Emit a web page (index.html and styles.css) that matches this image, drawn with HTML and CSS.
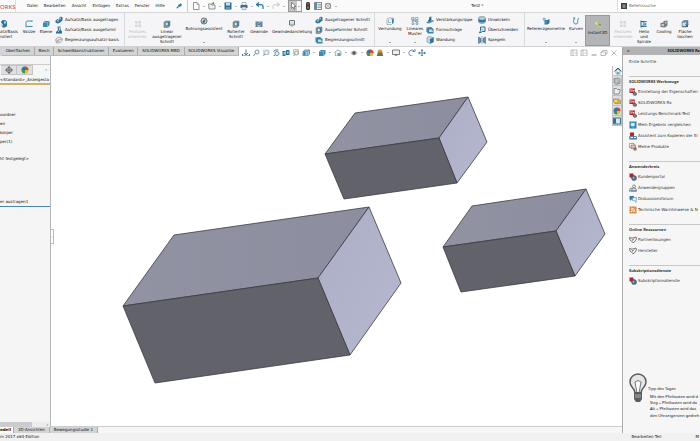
FILE: index.html
```html
<!DOCTYPE html>
<html lang="de">
<head>
    <meta charset="UTF-8">
    <meta name="viewport" content="width=device-width, initial-scale=1.0">
    <title>Teil2 *</title>
    <link rel="stylesheet" href="styles.css">
</head>
<body>
    <!-- shared icons, 16x16 grid -->
    <svg class="sprite" aria-hidden="true">
        <symbol id="i-extrude" viewBox="0 0 16 16"><path d="M1 9l4-3 3 2V4l4-3 3 2v6l-6 5-4 1-4-2z" fill="#2f7396"/><path d="M3 9l3-1 2 2-2 2zM9 4l3-1v3l-3 2z" fill="#9cc6dc"/></symbol>
        <symbol id="i-revolve" viewBox="0 0 16 16"><path d="M2 5a6 5 0 0 1 12 0v6a6 4 0 0 1-10 3l2-5z" fill="#2f7396"/><path d="M8 2v6l5-2a5 4 0 0 0-5-4zM1 9l5-1-3 5z" fill="#a9cee0"/></symbol>
        <symbol id="i-sketch" viewBox="0 0 16 16"><path d="M15 2H6C2 2 2 4 2 7v6h13" fill="none" stroke="#4189ab" stroke-width="2"/><path d="M1 12h3v3H1zM12 1h3v3h-3z" fill="#7fb0c8"/></symbol>
        <symbol id="i-plane" viewBox="0 0 16 16"><path d="M2 5l4-3h9v8l-4 4H2z" fill="#3f89ad"/><path d="M2 5h9v9M11 5l4-3" fill="none" stroke="#a9cee0"/></symbol>
        <symbol id="i-loft" viewBox="0 0 16 16"><path d="M5 1h6v6l3 4v4H2v-3l4-4z" fill="#2c6d91"/><path d="M7 3h2v5l-3 4" fill="none" stroke="#b1d2e1" stroke-width="2"/></symbol>
        <symbol id="i-boundary" viewBox="0 0 16 16"><path d="M1 7q3-5 9-5l5 4q-1 7-7 8H3z" fill="#e3e5e6" stroke="#777b7e"/><path d="M3 13q2-7 12-7M2 7l6 5" fill="none" stroke="#777b7e"/></symbol>
        <symbol id="i-muted" viewBox="0 0 16 16"><path d="M2 2h5v5H2zM9 2h5v5H9zM2 9h5v5H2zM9 9h5v5H9z" fill="#d4d5d7"/></symbol>
        <symbol id="i-cut" viewBox="0 0 16 16"><path d="M2 4l4-2h8v10l-4 3H2z" fill="#87959d" stroke="#66757d"/><path d="M5 5h5v6H5z" fill="#e7f1f5" stroke="#2c6d91"/><path d="M10 5l3-2v7l-3 2z" fill="#397ea1"/></symbol>
        <symbol id="i-hole" viewBox="0 0 16 16"><circle cx="8" cy="8" r="6" fill="#d9dddb" stroke="#667075" stroke-width="2"/><path d="M4 10l5-6 2 4-3 5z" fill="#3e7692"/><path d="M11 1l3 3-4 3z" fill="#bda34a"/></symbol>
        <symbol id="i-thread" viewBox="0 0 16 16"><path d="M1 3h14v11H1z" fill="#6b818d"/><path d="M5 3h6v9l-3 2-3-2z" fill="#b6dae9"/><path d="M5 5l6 2M5 8l6 2" stroke="#28688b" stroke-width="2"/></symbol>
        <symbol id="i-cosmetic" viewBox="0 0 16 16"><path d="M3 1h10v9H3z" fill="#f5f5f5" stroke="#74797c" stroke-width="2"/><path d="M6 3v6M10 3v6M6 11l2 3 2-3" fill="none" stroke="#8f9497"/></symbol>
        <symbol id="i-fillet" viewBox="0 0 16 16"><path d="M2 5q0-3 5-3h8v9l-4 4H2z" fill="#f0f5f7" stroke="#567c90"/><path d="M7 2q5 0 5 6v6l3-3V4z" fill="#3284aa"/><path d="M5 5v6h5" fill="none" stroke="#567c90"/></symbol>
        <symbol id="i-pattern" viewBox="0 0 16 16"><g fill="#e5f0f5" stroke="#49778e"><path d="M1 1h5v4H1zM9 1h5v4H9zM2 7h4v3H2zM9 7h5v3H9zM2 12h4v3H2zM10 12h4v3h-4z"/></g><path d="M4 3l8 8" stroke="#2b7297"/></symbol>
        <symbol id="i-rib" viewBox="0 0 16 16"><path d="M1 12l5-2V2l5-1v8l4-1v3l-9 4-5-1z" fill="#538eaa"/><path d="M3 11l7-9v7z" fill="#275f7d"/></symbol>
        <symbol id="i-draft" viewBox="0 0 16 16"><path d="M1 3l9-1 5 4v9H4L1 11z" fill="#3c83a5"/><path d="M6 7h6l2 5H6z" fill="#c2dce7"/></symbol>
        <symbol id="i-shell" viewBox="0 0 16 16"><path d="M2 3l5-2 8 2v9l-7 3-6-3z" fill="#c7d7df" stroke="#4c7990"/><path d="M8 6l7-3v9l-7 3z" fill="#2879a1"/></symbol>
        <symbol id="i-wrap" viewBox="0 0 16 16"><path d="M1 4q0-3 7-3t7 3v7q0 4-7 4t-7-4z" fill="#b7c9d2" stroke="#547486"/><path d="M1 6q7 4 14 0v5q-7 4-14 0z" fill="#2879a1"/></symbol>
        <symbol id="i-intersect" viewBox="0 0 16 16"><path d="M5 2h9v9H9l-6 3 2-5z" fill="#eef4f7" stroke="#296d91" stroke-width="2"/><circle cx="9" cy="7" r="2" fill="#8ab3c6"/></symbol>
        <symbol id="i-mirror" viewBox="0 0 16 16"><path d="M1 2l5 3v7l-5 3zM15 2l-5 3v7l5 3z" fill="#5d98b4" stroke="#285f7e"/><path d="M8 0v16" stroke="#444" stroke-dasharray="3 1"/></symbol>
        <symbol id="i-refgeo" viewBox="0 0 16 16"><path d="M5 6h6l4-2v8l-4 3H5z" fill="#2d769b"/><path d="M4 1v7M1 4h7" stroke="#74a5bd" stroke-width="2"/><path d="M8 7v6" stroke="#aed0df"/></symbol>
        <symbol id="i-curve" viewBox="0 0 16 16"><path d="M2 2h4c-5 6-3 12 2 12 6 0 1-9 6-12" fill="none" stroke="#3986aa" stroke-width="2"/></symbol>
        <symbol id="i-instant" viewBox="0 0 16 16"><path d="M1 3l5-2 4 5 5 8-7-4z" fill="#dfd44d"/><path d="M7 5l7 1v4l-7-1z" fill="#7da17b"/><path d="M2 4l7 5" stroke="#fff"/></symbol>
        <symbol id="i-helix" viewBox="0 0 16 16"><path d="M2 1v14M2 3h11M2 13h11" stroke="#27698b" stroke-width="2"/><path d="M13 3q-9 0-7 3 8 0 6 3-8-1-6 3h7" fill="none" stroke="#3a8fb7" stroke-width="2"/></symbol>
        <symbol id="i-cooling" viewBox="0 0 16 16"><path d="M1 6l6-1V2l8-1v10l-5 4-9-1z" fill="#777f84"/><path d="M3 8h5v4H3zM10 4h3v3h-3z" fill="#c4c9cb"/></symbol>
        <symbol id="i-delface" viewBox="0 0 16 16"><path d="M2 4l4-3h8v9l-3 4H2z" fill="#6690a5" stroke="#40697e"/><path d="M3 5h7v7H3z" fill="#c9dae2"/><path d="M9 9l5 5m0-5l-5 5" stroke="#454c51" stroke-width="2"/></symbol>

        <symbol id="i-pin" viewBox="0 0 16 16"><path d="M2 14l5-5M6 5l5 5M8 7l4-4 2 2-4 4" fill="none" stroke="#2c7ba4" stroke-width="3"/></symbol>
        <symbol id="i-new" viewBox="0 0 16 16"><path d="M3 1h7l4 4v10H3z" fill="#fff" stroke="#6f7376" stroke-width="1.5"/><path d="M10 1v4h4" fill="none" stroke="#6f7376"/></symbol>
        <symbol id="i-open" viewBox="0 0 16 16"><path d="M1 4h5l2 2h6v8H2z" fill="#eef1ed" stroke="#717b70" stroke-width="1.5"/><path d="M7 5q1-4 5-3l-1-1m1 1l-2 3" fill="none" stroke="#488c42" stroke-width="2"/></symbol>
        <symbol id="i-save" viewBox="0 0 16 16"><path d="M1 1h14v14H1z" fill="#2f7396"/><path d="M4 2h8v5H4z" fill="#cfe0e8"/><path d="M4 10h8v5H4z" fill="#7d8f98"/></symbol>
        <symbol id="i-print" viewBox="0 0 16 16"><path d="M4 1h8v5H4z" fill="#fff" stroke="#62757f"/><path d="M1 6h14v6H1z" fill="#35718f"/><path d="M4 10h8v5H4z" fill="#e8edf0" stroke="#62757f"/></symbol>
        <symbol id="i-undo" viewBox="0 0 16 16"><path d="M6 1L1 5l5 4M2 5h8q4 0 4 4v5" fill="none" stroke="#2f79a0" stroke-width="2.5"/></symbol>
        <symbol id="i-redo" viewBox="0 0 16 16"><path d="M10 1l5 4-5 4M14 5H6q-4 0-4 4v5" fill="none" stroke="#d3d4d6" stroke-width="2.5"/></symbol>
        <symbol id="i-cursor" viewBox="0 0 16 16"><path d="M5 1v12l3-3 2 5 2-1-2-5h4z" fill="#fff" stroke="#333"/></symbol>
        <symbol id="i-traffic" viewBox="0 0 16 16"><rect x="4" y="0" width="8" height="16" rx="3" fill="#34373a"/><circle cx="8" cy="4" r="2.5" fill="#c13a30"/><circle cx="8" cy="11" r="2.5" fill="#4e8b4a"/></symbol>
        <symbol id="i-props" viewBox="0 0 16 16"><path d="M1 1h14v14H1z" fill="#eef2f4" stroke="#526872" stroke-width="1.5"/><path d="M2 2h4v12H2z" fill="#688b9b"/><path d="M7 5h7M7 8h7M7 11h7" stroke="#526872"/></symbol>
        <symbol id="i-gear" viewBox="0 0 16 16"><circle cx="8" cy="8" r="5.5" fill="#ececec" stroke="#888" stroke-width="2"/><circle cx="8" cy="8" r="2" fill="none" stroke="#888"/><path d="M3 3l2 2M11 11l2 2M3 13l2-2M11 5l2-2" stroke="#888" stroke-width="2"/></symbol>
        <symbol id="i-cmd" viewBox="0 0 16 16"><path d="M0 0h16v16H0z" fill="#3b3f43"/><path d="M4 3h8v10H4z" fill="#8d9195"/><path d="M6 5h4M6 8h4" stroke="#3b3f43"/></symbol>

        <symbol id="i-normal" viewBox="0 0 16 16"><path d="M8 1v10M4 8l4 4 4-4M1 10v4h14v-4" fill="none" stroke="#467d98" stroke-width="2"/></symbol>
        <symbol id="i-zoomfit" viewBox="0 0 16 16"><circle cx="10" cy="6" r="4" fill="#f2f8fb" stroke="#6f97ab" stroke-width="2"/><path d="M7 9l-5 6" stroke="#6f7f87" stroke-width="2"/></symbol>
        <symbol id="i-zoomarea" viewBox="0 0 16 16"><path d="M3 2h11v9H3z" fill="none" stroke="#a7b1b7"/><circle cx="9" cy="7" r="4" fill="#f5f9fb" stroke="#8aa5b3" stroke-width="1.5"/><path d="M6 10l-4 5" stroke="#88959c" stroke-width="2"/></symbol>
        <symbol id="i-prev" viewBox="0 0 16 16"><circle cx="10" cy="9" r="4" fill="#f0f6f9" stroke="#688d9f" stroke-width="2"/><path d="M13 2H6L3 6M6 12l-4 3" fill="none" stroke="#4b8099" stroke-width="2"/></symbol>
        <symbol id="i-section" viewBox="0 0 16 16"><path d="M1 4h6v10H1zM8 2h7v10H8z" fill="#317495"/><path d="M3 6h3v5H3zM10 5h3v4h-3z" fill="#a7c8d7"/></symbol>
        <symbol id="i-annot" viewBox="0 0 16 16"><path d="M3 1h10v9H3z" fill="#f7efda" stroke="#a98d53"/><circle cx="9" cy="8" r="4" fill="#e8eef0" stroke="#7e8e96" stroke-width="1.5"/><path d="M6 11l-4 4" stroke="#7e8e96" stroke-width="2"/></symbol>
        <symbol id="i-cube" viewBox="0 0 16 16"><path d="M2 5l4-3h9v8l-4 4H2z" fill="#a9cddd" stroke="#487e98" stroke-width="1.5"/><path d="M2 5h9v9M11 5l4-3" fill="none" stroke="#487e98"/><path d="M3 6h4v7H3z" fill="#3e84a6"/></symbol>
        <symbol id="i-hide" viewBox="0 0 16 16"><path d="M2 6l5-4 7 3v7l-4 2H3z" fill="#eef3f5" stroke="#7d98a5" stroke-width="1.5"/><path d="M7 8h6v6H7z" fill="#6ba0b9"/></symbol>
        <symbol id="i-eye" viewBox="0 0 16 16"><path d="M1 8q7-8 14 0-7 8-14 0z" fill="#e0e0e0" stroke="#8e9194"/><circle cx="8" cy="8" r="3.5" fill="#4f5458"/></symbol>
        <symbol id="i-ball" viewBox="0 0 16 16"><circle cx="8" cy="8" r="7" fill="#ddbe49"/><path d="M8 8V1a7 7 0 0 0-7 7z" fill="#3a73a9"/><path d="M8 8V1a7 7 0 0 1 7 7z" fill="#c74a37"/><path d="M8 8H1a7 7 0 0 0 7 7z" fill="#4a9055"/></symbol>
        <symbol id="i-scene" viewBox="0 0 16 16"><circle cx="8" cy="6" r="5" fill="#c99b48"/><path d="M1 15l3-8h8l3 8z" fill="#4e8155"/><path d="M8 7l5 1-1 4-4-1z" fill="#b45440"/></symbol>
        <symbol id="i-monitor" viewBox="0 0 16 16"><path d="M1 2h14v9H1zM5 14h6M8 11v3" fill="#f0f1f2" stroke="#777d82" stroke-width="2"/></symbol>
        <symbol id="i-rotate" viewBox="0 0 16 16"><path d="M9 14A6 6 0 1 1 12 4M14 0v5H9" fill="none" stroke="#4b91b1" stroke-width="2"/></symbol>
        <symbol id="i-pan" viewBox="0 0 16 16"><path d="M8 1v14M1 8h14" stroke="#5689a3" stroke-width="2"/><path d="M8 0l3 4H5zM8 16l3-4H5zM0 8l4-3v6zM16 8l-4-3v6z" fill="#5689a3"/></symbol>

        <symbol id="i-wpane" viewBox="0 0 16 16"><path d="M2 2h12v12H2zM6 2v12M9 8h4" fill="none" stroke="#a4a6a8" stroke-width="1.5"/></symbol>
        <symbol id="i-wmin" viewBox="0 0 16 16"><path d="M3 12h10" stroke="#8b8d8f" stroke-width="2"/></symbol>
        <symbol id="i-wrestore" viewBox="0 0 16 16"><path d="M2 6h9v7H2zM5 6V3h9v7h-3" fill="none" stroke="#a4a6a8" stroke-width="1.5"/></symbol>
        <symbol id="i-wclose" viewBox="0 0 16 16"><path d="M3 3l10 10M13 3L3 13" stroke="#a4a6a8" stroke-width="1.5"/></symbol>

        <symbol id="i-target" viewBox="0 0 16 16"><circle cx="8" cy="8" r="5" fill="none" stroke="#454749" stroke-width="1.5"/><path d="M8 0v16M0 8h16" stroke="#454749" stroke-width="1.5"/></symbol>
        <symbol id="i-home" viewBox="0 0 16 16"><path d="M1 9l7-7 7 7" fill="none" stroke="#265b7a" stroke-width="2"/><path d="M4 8v6h8V8L8 4z" fill="#e9f2f7" stroke="#397593"/><path d="M7 10h2v4H7z" fill="#265b7a"/></symbol>
        <symbol id="i-library" viewBox="0 0 16 16"><path d="M2 3l8-1 4 2v9l-8 2-4-3z" fill="#a9aaaa" stroke="#6f7172"/><path d="M6 6l7-1M6 9l7-1M6 5v9" stroke="#e3e3e3"/></symbol>
        <symbol id="i-folder" viewBox="0 0 16 16"><path d="M2 14V3h5l2 2h5v3L12 14z" fill="#eee" stroke="#6c6e70" stroke-width="1.5"/></symbol>
        <symbol id="i-palette" viewBox="0 0 16 16"><path d="M1 4h10l4 3v6H4l-3-3z" fill="#d6af46" stroke="#90752f"/><path d="M3 6h5v4H3z" fill="#f4dc92"/></symbol>
        <symbol id="i-list" viewBox="0 0 16 16"><path d="M1 2h14v12H1z" fill="#d8e5eb" stroke="#3f7591" stroke-width="2"/><path d="M2 3h4v10H2z" fill="#33708e"/></symbol>

        <symbol id="i-sw" viewBox="0 0 16 16"><path d="M1 1h11v9H1z" fill="#b0222c"/><path d="M5 3H3v2h2v2H3M7 3l1 4 1-3 1 3 1-4" fill="none" stroke="#fff"/><path d="M8 9l4-1 3 2v4l-4 1-3-2z" fill="#7b7d82" stroke="#46484c"/></symbol>
        <symbol id="i-compare" viewBox="0 0 16 16"><path d="M1 1h14v14H1z" fill="#2f86b3"/><path d="M4 4h7v6H4zM6 12h5" fill="#e7f4fa" stroke="#9cc9df"/></symbol>
        <symbol id="i-assist" viewBox="0 0 16 16"><path d="M2 1h8v7H2z" fill="#b0222c"/><path d="M0 9l7-2 9 2v6H1z" fill="#54799a"/><path d="M3 11h5M10 11h4" stroke="#fff" stroke-width="2"/></symbol>
        <symbol id="i-products" viewBox="0 0 16 16"><path d="M1 1h9v8H1z" fill="#fff" stroke="#a83038"/><path d="M4 4h9v7H4z" fill="#d7c3bf" stroke="#a83038"/><path d="M9 9h6v6H9z" fill="#777"/></symbol>
        <symbol id="i-globe" viewBox="0 0 16 16"><path d="M1 1h8v8H1z" fill="#b0222c"/><circle cx="10" cy="10" r="5" fill="#516b86" stroke="#3b4754"/><path d="M7 9l3-2 1 3-2 3z" fill="#a5b5b1"/></symbol>
        <symbol id="i-group" viewBox="0 0 16 16"><circle cx="10" cy="5" r="3" fill="#f3f3f3" stroke="#66696c" stroke-width="1.5"/><path d="M5 14q0-6 5-6t5 6zM1 13q0-5 5-5" fill="#e4e5e6" stroke="#66696c" stroke-width="1.5"/><path d="M0 14h15" stroke="#4d7da0" stroke-width="2"/></symbol>
        <symbol id="i-forum" viewBox="0 0 16 16"><path d="M1 2h9v7H5l-3 3V9H1z" fill="#3c7ca3"/><path d="M7 5h8v6h-1v4l-3-4H7z" fill="#dcebf3" stroke="#3c7ca3"/></symbol>
        <symbol id="i-rss" viewBox="0 0 16 16"><rect x="1" y="1" width="14" height="14" fill="#e1893f"/><circle cx="5" cy="11" r="1.5" fill="#fff"/><path d="M4 7q5 0 5 5M4 4q8 0 8 8" fill="none" stroke="#fff" stroke-width="1.5"/></symbol>
        <symbol id="i-hands" viewBox="0 0 16 16"><path d="M1 3l4 1h3l6-2 1 4-5 7H8L2 8z" fill="#f5f5f5" stroke="#4c4f52" stroke-width="1.5"/><path d="M5 5l3 3 3-3M6 10l3-3" fill="none" stroke="#4c4f52"/></symbol>
    </svg>

    <header class="topbar">
        <span class="logo">ORKS</span>
        <nav class="menu">
            <a href="#">Datei</a>
            <a href="#">Bearbeiten</a>
            <a href="#">Ansicht</a>
            <a href="#">Einfügen</a>
            <a href="#">Extras</a>
            <a href="#">Fenster</a>
            <a href="#">Hilfe</a>
        </nav>
        <button class="pin" aria-label="Anheften"><svg class="icon"><use href="#i-pin"/></svg></button>
        <div class="quick">
            <button class="drop" aria-label="Neu"><svg class="icon"><use href="#i-new"/></svg></button>
            <button class="drop" aria-label="Öffnen"><svg class="icon"><use href="#i-open"/></svg></button>
            <button class="drop" aria-label="Speichern"><svg class="icon"><use href="#i-save"/></svg></button>
            <button class="drop" aria-label="Drucken"><svg class="icon"><use href="#i-print"/></svg></button>
            <button class="drop" aria-label="Rückgängig"><svg class="icon"><use href="#i-undo"/></svg></button>
            <button class="drop" aria-label="Wiederherstellen"><svg class="icon"><use href="#i-redo"/></svg></button>
            <button class="drop picked" aria-label="Auswählen"><svg class="icon"><use href="#i-cursor"/></svg></button>
            <button aria-label="Modellneuaufbau"><svg class="icon"><use href="#i-traffic"/></svg></button>
            <button aria-label="Dateieigenschaften"><svg class="icon"><use href="#i-props"/></svg></button>
            <button class="drop" aria-label="Optionen"><svg class="icon"><use href="#i-gear"/></svg></button>
        </div>
        <h1 class="doc-title">Teil2 *</h1>
        <div class="search">
            <svg class="icon"><use href="#i-cmd"/></svg>
            <input type="text" placeholder="Befehlssuche" aria-label="Befehlssuche">
        </div>
    </header>

    <div class="ribbon">
        <div class="tools boss">
            <button class="tool cropped"><svg class="icon"><use href="#i-revolve"/></svg>atz/Basis<br>rotiert</button>
            <button class="tool"><svg class="icon"><use href="#i-sketch"/></svg>Skizze</button>
            <button class="tool"><svg class="icon"><use href="#i-plane"/></svg>Ebene</button>
            <div class="stack">
                <button><svg class="icon"><use href="#i-extrude"/></svg>Aufsatz/Basis ausgetragen</button>
                <button><svg class="icon"><use href="#i-loft"/></svg>Aufsatz/Basis ausgeformt</button>
                <button><svg class="icon"><use href="#i-boundary"/></svg>Begrenzungsaufsatz/-basis</button>
            </div>
        </div>
        <div class="tools cuts">
            <button class="tool" disabled><svg class="icon"><use href="#i-muted"/></svg>Features<br>erkennen</button>
            <button class="tool"><svg class="icon"><use href="#i-cut"/></svg>Linear<br>ausgetragener<br>Schnitt</button>
            <button class="tool more high"><svg class="icon"><use href="#i-hole"/></svg>Bohrungsassistent</button>
            <button class="tool"><svg class="icon"><use href="#i-cut"/></svg>Rotierter<br>Schnitt</button>
            <button class="tool"><svg class="icon"><use href="#i-thread"/></svg>Gewinde</button>
            <button class="tool"><svg class="icon"><use href="#i-cosmetic"/></svg>Gewindedarstellung</button>
            <div class="stack">
                <button><svg class="icon"><use href="#i-extrude"/></svg>Ausgetragener Schnitt</button>
                <button><svg class="icon"><use href="#i-cut"/></svg>Ausgeformter Schnitt</button>
                <button><svg class="icon"><use href="#i-draft"/></svg>Begrenzungsschnitt</button>
            </div>
        </div>
        <div class="tools shapes">
            <button class="tool more high"><svg class="icon"><use href="#i-fillet"/></svg>Verrundung</button>
            <button class="tool more high"><svg class="icon"><use href="#i-pattern"/></svg>Lineares<br>Muster</button>
            <div class="stack">
                <button><svg class="icon"><use href="#i-rib"/></svg>Verstärkungsrippe</button>
                <button><svg class="icon"><use href="#i-draft"/></svg>Formschräge</button>
                <button><svg class="icon"><use href="#i-shell"/></svg>Wandung</button>
            </div>
            <div class="stack">
                <button><svg class="icon"><use href="#i-wrap"/></svg>Umwickeln</button>
                <button><svg class="icon"><use href="#i-intersect"/></svg>Überschneiden</button>
                <button><svg class="icon"><use href="#i-mirror"/></svg>Spiegeln</button>
            </div>
        </div>
        <div class="tools extras">
            <button class="tool more high"><svg class="icon"><use href="#i-refgeo"/></svg>Referenzgeometrie</button>
            <button class="tool more high"><svg class="icon"><use href="#i-curve"/></svg>Kurven</button>
            <button class="tool active"><svg class="icon"><use href="#i-instant"/></svg>Instant3D</button>
            <button class="tool" disabled><svg class="icon"><use href="#i-muted"/></svg>Features<br>erkennen</button>
            <button class="tool"><svg class="icon"><use href="#i-helix"/></svg>Helix<br>und<br>Spirale</button>
            <button class="tool"><svg class="icon"><use href="#i-cooling"/></svg>Cooling</button>
            <button class="tool"><svg class="icon"><use href="#i-delface"/></svg>Fläche<br>löschen</button>
        </div>
    </div>

    <div class="main">
        <div class="work">
            <div class="tabline">
                <div class="ribbon-tabs">
                    <button>Oberflächen</button>
                    <button>Blech</button>
                    <button>Schweißkonstruktionen</button>
                    <button>Evaluieren</button>
                    <button>SOLIDWORKS MBD</button>
                    <button>SOLIDWORKS Visualize</button>
                </div>
                <div class="view-tools">
                    <button aria-label="Normal auf"><svg class="icon"><use href="#i-normal"/></svg></button>
                    <button aria-label="In Fenster zoomen"><svg class="icon"><use href="#i-zoomfit"/></svg></button>
                    <button aria-label="Ausschnitt vergrößern"><svg class="icon"><use href="#i-zoomarea"/></svg></button>
                    <button aria-label="Vorherige Ansicht"><svg class="icon"><use href="#i-prev"/></svg></button>
                    <button aria-label="Schnittansicht"><svg class="icon"><use href="#i-section"/></svg></button>
                    <button aria-label="Beschriftungen"><svg class="icon"><use href="#i-annot"/></svg></button>
                    <button class="drop" aria-label="Ausrichtung"><svg class="icon"><use href="#i-cube"/></svg></button>
                    <button class="drop" aria-label="Anzeigeart"><svg class="icon"><use href="#i-plane"/></svg></button>
                    <button class="drop" aria-label="Kanten"><svg class="icon"><use href="#i-hide"/></svg></button>
                    <button class="drop" aria-label="Ausblenden"><svg class="icon"><use href="#i-eye"/></svg></button>
                    <button aria-label="Erscheinungsbild"><svg class="icon"><use href="#i-ball"/></svg></button>
                    <button class="drop" aria-label="Bühne"><svg class="icon"><use href="#i-scene"/></svg></button>
                    <button class="drop" aria-label="Ansichtseinstellungen"><svg class="icon"><use href="#i-monitor"/></svg></button>
                    <button aria-label="Drehen"><svg class="icon"><use href="#i-rotate"/></svg></button>
                    <button aria-label="Verschieben"><svg class="icon"><use href="#i-pan"/></svg></button>
                </div>
                <div class="window-tools">
                    <button aria-label="Links anordnen"><svg class="icon"><use href="#i-wpane"/></svg></button>
                    <button aria-label="Rechts anordnen"><svg class="icon"><use href="#i-wpane"/></svg></button>
                    <button aria-label="Minimieren"><svg class="icon"><use href="#i-wmin"/></svg></button>
                    <button aria-label="Verkleinern"><svg class="icon"><use href="#i-wrestore"/></svg></button>
                    <button aria-label="Schließen"><svg class="icon"><use href="#i-wclose"/></svg></button>
                </div>
            </div>

            <div class="stage">
                <aside class="tree">
                    <div class="tree-tabs">
                        <button aria-label="Abmessungen"><svg class="icon"><use href="#i-target"/></svg></button>
                        <button aria-label="Darstellung"><svg class="icon"><use href="#i-ball"/></svg></button>
                        <button class="next" aria-label="Weitere">›</button>
                    </div>
                    <p class="config">&lt;Standard&gt;_Anzeigesta</p>
                    <ul class="features">
                        <li>oordner</li>
                        <li>en</li>
                        <li>körper</li>
                        <li>per(1)</li>
                        <li class="material">ht festgelegt&gt;</li>
                        <li class="last">er austragen1</li>
                    </ul>
                    <div class="hscroll"><span class="thumb"></span>›</div>
                </aside>
                <div class="viewport">
                    <button class="handle" aria-label="Baum einklappen">‹</button>
                    <svg class="model" viewBox="51 56 571 370" preserveAspectRatio="xMinYMin meet" role="img" aria-label="Drei Quader">
                        <defs>
                            <linearGradient id="side" x1="0" y1="0" x2="1" y2="1">
                                <stop offset="0" stop-color="#abaec4"/>
                                <stop offset="1" stop-color="#b5b8ce"/>
                            </linearGradient>
                            <linearGradient id="lid" x1="0" y1="0" x2="1" y2="0">
                                <stop offset="0" stop-color="#9193a3"/>
                                <stop offset="1" stop-color="#8c8e9f"/>
                            </linearGradient>
                        </defs>
                        <g class="box">
                            <path class="lid" d="M123 306L174 235L369 207L318 278Z"/>
                            <path class="side" d="M369 207L401 283L350 355L318 278Z"/>
                            <path class="front" d="M123 306L318 278L350 355L155 383Z"/>
                        </g>
                        <g class="box">
                            <path class="lid" d="M325 154L355 113L468 97L439 138Z"/>
                            <path class="side" d="M468 97L487 142L457 183L439 138Z"/>
                            <path class="front" d="M325 154L439 138L457 183L344 199Z"/>
                        </g>
                        <g class="box">
                            <path class="lid" d="M443 247L472 206L586 189L556 231Z"/>
                            <path class="side" d="M586 189L605 234L575 276L556 231Z"/>
                            <path class="front" d="M443 247L556 231L575 276L461 292Z"/>
                        </g>
                    </svg>
                    <div class="pane-tabs">
                        <button class="on" aria-label="Ressourcen"><svg class="icon"><use href="#i-home"/></svg></button>
                        <button aria-label="Konstruktionsbibliothek"><svg class="icon"><use href="#i-library"/></svg></button>
                        <button aria-label="Datei-Explorer"><svg class="icon"><use href="#i-folder"/></svg></button>
                        <button aria-label="Ansichtspalette"><svg class="icon"><use href="#i-palette"/></svg></button>
                        <button aria-label="Erscheinungsbilder"><svg class="icon"><use href="#i-ball"/></svg></button>
                        <button aria-label="Eigenschaften"><svg class="icon"><use href="#i-list"/></svg></button>
                    </div>
                </div>
            </div>

            <div class="doc-tabs">
                <button class="on">odell</button>
                <button>3D-Ansichten</button>
                <button>Bewegungsstudie 1</button>
            </div>
        </div>

        <aside class="pane">
            <h2 class="pane-head"><span>«</span>SOLIDWORKS Re</h2>
            <p class="first-steps">Erste Schritte</p>
            <section>
                <h3>SOLIDWORKS Werkzeuge</h3>
                <a href="#"><svg class="icon"><use href="#i-sw"/></svg>Einstellung der Eigenschaften-</a>
                <a href="#"><svg class="icon"><use href="#i-sw"/></svg>SOLIDWORKS Rx</a>
                <a href="#"><svg class="icon"><use href="#i-sw"/></svg>Leistungs-Benchmark-Test</a>
                <a href="#"><svg class="icon"><use href="#i-compare"/></svg>Mein Ergebnis vergleichen</a>
                <a href="#"><svg class="icon"><use href="#i-assist"/></svg>Assistent zum Kopieren der Ei</a>
                <a href="#"><svg class="icon"><use href="#i-products"/></svg>Meine Produkte</a>
            </section>
            <section>
                <h3>Anwenderkreis</h3>
                <a href="#"><svg class="icon"><use href="#i-globe"/></svg>Kundenportal</a>
                <a href="#"><svg class="icon"><use href="#i-group"/></svg>Anwendergruppen</a>
                <a href="#"><svg class="icon"><use href="#i-forum"/></svg>Diskussionsforum</a>
                <a href="#"><svg class="icon"><use href="#i-rss"/></svg>Technische Warnhinweise &amp; N</a>
            </section>
            <section>
                <h3>Online Ressourcen</h3>
                <a href="#"><svg class="icon"><use href="#i-hands"/></svg>Partnerlösungen</a>
                <a href="#"><svg class="icon"><use href="#i-hands"/></svg>Hersteller</a>
            </section>
            <section>
                <h3>Subskriptionsdienste</h3>
                <a href="#"><svg class="icon"><use href="#i-globe"/></svg>Subskriptionsdienste</a>
            </section>
            <div class="tip">
                <svg class="bulb" viewBox="0 0 18 30" aria-hidden="true">
                    <path d="M6 20Q6 17 3 14Q1 12 1 9A8 8 0 0 1 17 9Q17 12 15 14Q12 17 12 20Z" fill="#e4e5e5" stroke="#55585b" stroke-width="1.4"/>
                    <path d="M8 20L6 9Q9 6 12 9L10 20" fill="#fafafa" stroke="#77797b"/>
                    <path d="M5 19h8v7l-2 3H7l-2-3z" fill="#5a5d60"/>
                    <path d="M6 22h6M6 24h6" stroke="#b0b2b3"/>
                </svg>
                <div class="tip-text">
                    <h3>Tipp des Tages</h3>
                    <p>Mit den Pfeiltasten wird d<br>Strg + Pfeiltasten wird da<br>Alt + Pfeiltasten wird das</p>
                    <p class="end">den Uhrzeigersinn gedreh</p>
                </div>
            </div>
        </aside>
    </div>

    <footer class="status">
        <span class="edition">m 2017 x64-Edition</span>
        <span class="mode">Bearbeiten Teil</span>
        <span>M</span>
    </footer>
</body>
</html>
```
FILE: styles.css
```css
* {
    box-sizing: border-box;
}
body {
    display: flex;
    flex-direction: column;
    height: 100vh;
    margin: 0;
    overflow: hidden;
    font-family: "DejaVu Sans", Verdana, sans-serif;
    font-size: 4px;
    line-height: 6px;
    color: #111;
    background: #f6f6f7;
    white-space: nowrap;
}
h1, h2, h3, p, ul {
    margin: 0;
    padding: 0;
    font-size: 4px;
    font-weight: normal;
    list-style: none;
}
h2, h3, .tip {
    font-family: "Noto Sans", "Open Sans", sans-serif;
}
a {
    color: inherit;
    text-decoration: none;
}
button, input {
    margin: 0;
    padding: 0;
    border: 0;
    background: none;
    color: inherit;
    font: inherit;
    white-space: nowrap;
}
.sprite {
    position: absolute;
    width: 0;
    height: 0;
}
.icon {
    display: block;
    flex: none;
    width: 8px;
    height: 8px;
}

/* small drop-down arrow */
.drop {
    display: flex;
    align-items: center;
}
.drop::after {
    content: "";
    margin-left: 3px;
    border: 1px solid transparent;
    border-top-color: #777;
    border-bottom: 0;
}

/* title bar */
.topbar {
    display: flex;
    flex: none;
    align-items: center;
    height: 13px;
    border-bottom: 1px solid #d5d6d8;
    background: #fafafa;
}
.logo {
    width: 16px;
    height: 12px;
    border-right: 1px solid #ddd;
    color: #c5453d;
    font-family: "Noto Sans", "Open Sans", sans-serif;
    font-size: 6px;
    line-height: 15px;
}
.menu {
    display: flex;
    gap: 6px;
    width: 160px;
    padding-left: 11px;
}
.pin {
    width: 12px;
    height: 12px;
    border-right: 1px solid #ccc;
}
.pin .icon {
    width: 6px;
    height: 6px;
}
.quick {
    display: flex;
    align-items: center;
    gap: 2px;
    padding-left: 4px;
}
.quick .drop {
    width: 14px;
}
.quick .picked {
    height: 12px;
    border: 1px solid #999;
    background: linear-gradient(to right, #c4c5c6 8px, #f6f6f6 8px);
}
.quick .picked::after {
    margin-left: 1px;
}
.doc-title {
    flex: 1;
    text-align: center;
}
.search {
    display: flex;
    align-items: center;
    gap: 2px;
    width: 83px;
    height: 12px;
    padding-left: 3px;
    border-left: 1px solid #ddd;
    background: #fff;
}
.search .icon {
    width: 6px;
    height: 6px;
}
.search input {
    width: 60px;
}
.search input::placeholder {
    color: #666;
    opacity: 1;
}

/* ribbon */
.ribbon {
    display: flex;
    flex: none;
    height: 34px;
    border-bottom: 1px solid #d0d1d3;
    background: #f5f5f7;
}
.tools {
    display: grid;
    flex: none;
    border-right: 1px solid #d9dadc;
}
.boss {
    grid-template-columns: 20px 18px 16px 70px;
}
.cuts {
    grid-template-columns: 25px 34px 40px 24px 22px 44px 60px;
}
.shapes {
    grid-template-columns: 30px 20px 52px 47px;
}
.extras {
    grid-template-columns: 42px 18px 25px 26px 16px 24px 18px;
    border-right: 0;
}
.tool {
    display: flex;
    flex-direction: column;
    align-items: center;
    justify-content: flex-start;
    padding-top: 7px;
    line-height: 5px;
    text-align: center;
}
.tool .icon {
    margin-bottom: 1px;
}
.tool.cropped {
    align-items: flex-start;
    text-align: left;
}
.tool.high {
    padding-top: 4px;
}
.tool.more::after {
    content: "";
    margin-top: auto;
    margin-bottom: 3px;
    border: 1px solid transparent;
    border-top-color: #555;
    border-bottom: 0;
}
.tool:disabled {
    color: #bbb;
}
.tool.active {
    margin-top: 2px;
    padding-top: 5px;
    border: 1px solid #999;
    background: #b3b4b6;
}
.stack {
    display: flex;
    flex-direction: column;
    gap: 2px;
    padding-top: 3px;
    padding-left: 1px;
}
.stack button {
    display: flex;
    align-items: center;
    gap: 2px;
    line-height: 8px;
}

/* main area */
.main {
    display: grid;
    grid-template-columns: 1fr 78px;
    flex: 1;
    min-height: 0;
}
.work {
    display: flex;
    flex-direction: column;
    min-width: 0;
}
.tabline {
    display: flex;
    flex: none;
    height: 9px;
    background: #fff;
}
.ribbon-tabs {
    display: flex;
    width: 239px;
    padding-left: 2px;
    background: #d3d4d5;
}
.ribbon-tabs button {
    flex: auto;
    border-right: 1px solid #a9aaac;
    border-bottom: 1px solid #b9babc;
}
.view-tools {
    display: flex;
    align-items: center;
    gap: 2px;
    padding-top: 2px;
    padding-left: 3px;
}
.view-tools .drop {
    width: 14px;
}
.window-tools {
    display: flex;
    align-items: center;
    gap: 2px;
    margin-left: auto;
    padding-top: 3px;
    padding-right: 4px;
}
.stage {
    display: grid;
    grid-template-columns: 51px 1fr;
    flex: 1;
    min-height: 0;
}

/* feature tree */
.tree {
    display: flex;
    flex-direction: column;
    min-width: 0;
    padding-top: 8px;
    border-right: 1px solid #b5b6b8;
    background: #f5f5f6;
}
.tree-tabs {
    display: flex;
    flex: none;
    height: 11px;
    padding-left: 1px;
    border-top: 1px solid #ccc;
}
.tree-tabs button {
    display: flex;
    align-items: center;
    justify-content: center;
    width: 16px;
    border: 1px solid #c3c4c6;
    border-left: 0;
    background: #dedfe0;
}
.tree-tabs .next {
    margin-left: auto;
    width: 8px;
    border: 0;
    background: none;
}
.config {
    height: 10px;
    line-height: 9px;
    border-bottom: 2px solid #cdb36d;
}
.features {
    flex: 1;
    padding-top: 25px;
    line-height: 9px;
}
.features .material {
    margin-top: 8px;
}
.features .last {
    margin-top: 34px;
    border-bottom: 1px solid #4d83b8;
}
.hscroll {
    display: flex;
    flex: none;
    justify-content: space-between;
    height: 5px;
    padding-right: 2px;
    line-height: 5px;
    background: #ececed;
}
.thumb {
    width: 32px;
    background: #cbccce;
}

/* graphics area */
.viewport {
    position: relative;
    background: #fff;
    border-bottom: 1px solid #ccc;
}
.model {
    display: block;
    width: 100%;
    height: 100%;
}
.box {
    stroke: #3b3b42;
    stroke-width: 0.8;
    stroke-linejoin: round;
}
.lid {
    fill: url(#lid);
}
.side {
    fill: url(#side);
}
.front {
    fill: #62626b;
}
.handle {
    position: absolute;
    top: 173px;
    left: 0;
    width: 3px;
    height: 15px;
    border: 1px solid #bbb;
    border-left: 0;
    color: #888;
}
.pane-tabs {
    position: absolute;
    top: 10px;
    right: 0;
    display: flex;
    flex-direction: column;
    width: 10px;
}
.pane-tabs button {
    display: flex;
    align-items: center;
    justify-content: center;
    height: 10px;
    border: 1px solid #bfc0c2;
    border-top: 0;
    background: #dcddde;
}
.pane-tabs .on {
    border-right: 0;
    background: #f8f8f9;
}

.doc-tabs {
    display: flex;
    flex: none;
    height: 7px;
    border-bottom: 1px solid #c5c6c8;
}
.doc-tabs button {
    padding: 0 4px;
    border-right: 1px solid #aaa;
    background: #d3d4d5;
}
.doc-tabs .on {
    padding: 0 2px 0 0;
    background: #fff;
    font-weight: bold;
}

/* task pane */
.pane {
    display: flex;
    flex-direction: column;
    min-width: 0;
    border-left: 1px solid #aaacae;
    background: #f6f6f7;
    color: #333;
}
.pane-head {
    display: flex;
    flex: none;
    justify-content: space-between;
    height: 8px;
    padding-left: 4px;
    background: #b1b3b5;
    color: #111;
    font-weight: bold;
    line-height: 8px;
}
.first-steps {
    flex: none;
    height: 21px;
    padding: 4px 6px;
}
.pane section {
    flex: none;
    margin-left: 6px;
    padding: 1px 0 9px;
    border-top: 1px solid #c6c7c9;
}
.pane section h3 {
    height: 8px;
    font-weight: bold;
    line-height: 8px;
}
.pane section a {
    display: flex;
    align-items: center;
    gap: 1px;
    height: 11px;
}
.tip {
    display: flex;
    gap: 1px;
    margin-top: auto;
    padding-left: 6px;
    color: #111;
}
.bulb {
    flex: none;
    width: 18px;
    height: 30px;
}
.tip-text {
    padding-top: 13px;
}
.tip-text h3 {
    margin-bottom: 2px;
}
.tip-text p {
    padding-left: 2px;
}
.tip-text .end {
    padding-bottom: 15px;
    line-height: 7px;
}

/* status bar */
.status {
    display: flex;
    flex: none;
    height: 8px;
    padding-right: 1px;
    line-height: 8px;
    background: #f1f1f2;
}
.edition {
    flex: 1;
}
.mode {
    width: 64px;
}
```
